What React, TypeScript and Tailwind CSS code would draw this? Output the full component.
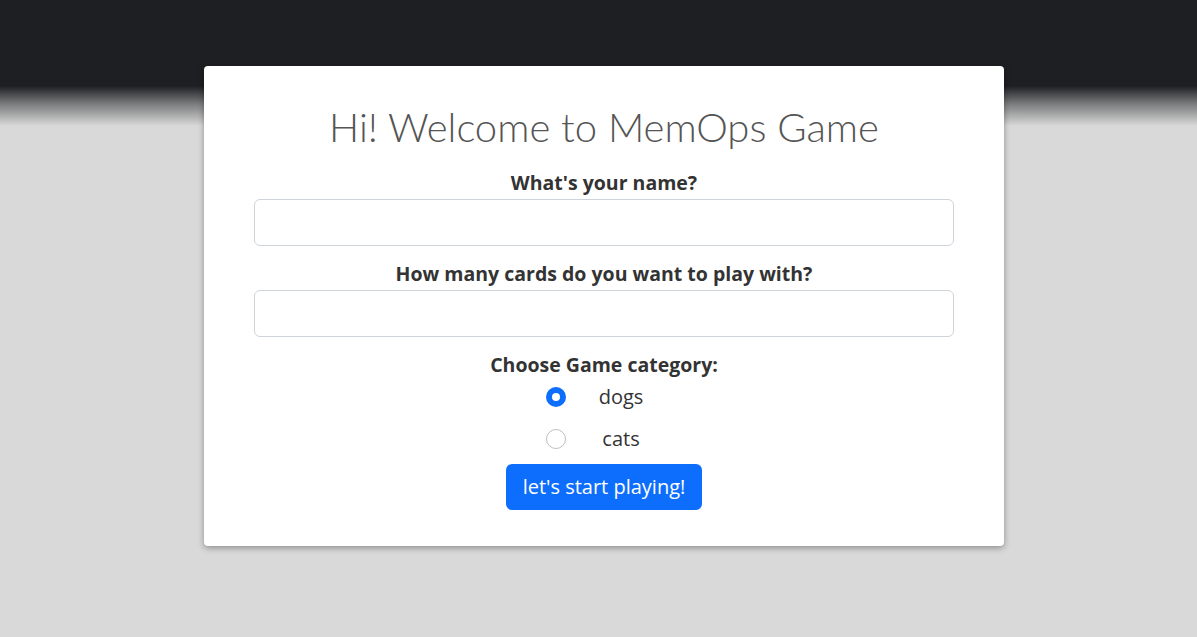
import React from "react";

export default function App() {
  return (
    <div
      className="min-h-[637px] w-full flex justify-center pt-[66px] pl-[11px]"
      style={{
        background:
          "linear-gradient(to bottom, #1d1f23 0px, #1d1f23 86px, #7b7c7d 104px, #d9d9d9 126px, #d9d9d9 100%)",
        fontFamily: '"Open Sans", sans-serif',
      }}
    >
      <div className="w-[800px] h-[480px] bg-white rounded-[4px] shadow-[0_2px_6px_rgba(0,0,0,0.35)] pt-[37px] flex flex-col items-center">
        <h1
          className="text-[40px] leading-[48px] text-[#555] font-light"
          style={{ fontFamily: 'Lato, "Open Sans", sans-serif' }}
        >
          Hi! Welcome to MemOps Game
        </h1>
        <label className="mt-[18px] text-[19.5px] leading-[27px] font-bold text-[#333]">
          What's your name?
        </label>
        <input
          type="text"
          className="mt-[3px] w-[700px] h-[47px] border border-[#ced4da] rounded-[6px] outline-none px-3"
        />
        <label className="mt-[14px] text-[19.5px] leading-[27px] font-bold text-[#333]">
          How many cards do you want to play with?
        </label>
        <input
          type="text"
          className="mt-[3px] w-[700px] h-[47px] border border-[#ced4da] rounded-[6px] outline-none px-3"
        />
        <label className="mt-[14px] text-[19.5px] leading-[27px] font-bold text-[#333]">
          Choose Game category:
        </label>
        <div className="flex flex-col -mt-[2px]">
          <div className="h-[42px] flex items-center gap-[14px]">
            <span className="w-[20px] h-[20px] rounded-full bg-[#0d6efd] flex items-center justify-center">
              <span className="w-[8px] h-[8px] rounded-full bg-white" />
            </span>
            <span className="w-[82px] text-center text-[20px] text-[#333]">dogs</span>
          </div>
          <div className="h-[42px] flex items-center gap-[14px]">
            <span className="w-[20px] h-[20px] rounded-full border border-[#bfbfbf] bg-white" />
            <span className="w-[82px] text-center text-[20px] text-[#333]">cats</span>
          </div>
        </div>
        <button className="mt-[4px] w-[196px] h-[46px] bg-[#0d6efd] text-white text-[20px] rounded-[6px]">
          let's start playing!
        </button>
      </div>
    </div>
  );
}
